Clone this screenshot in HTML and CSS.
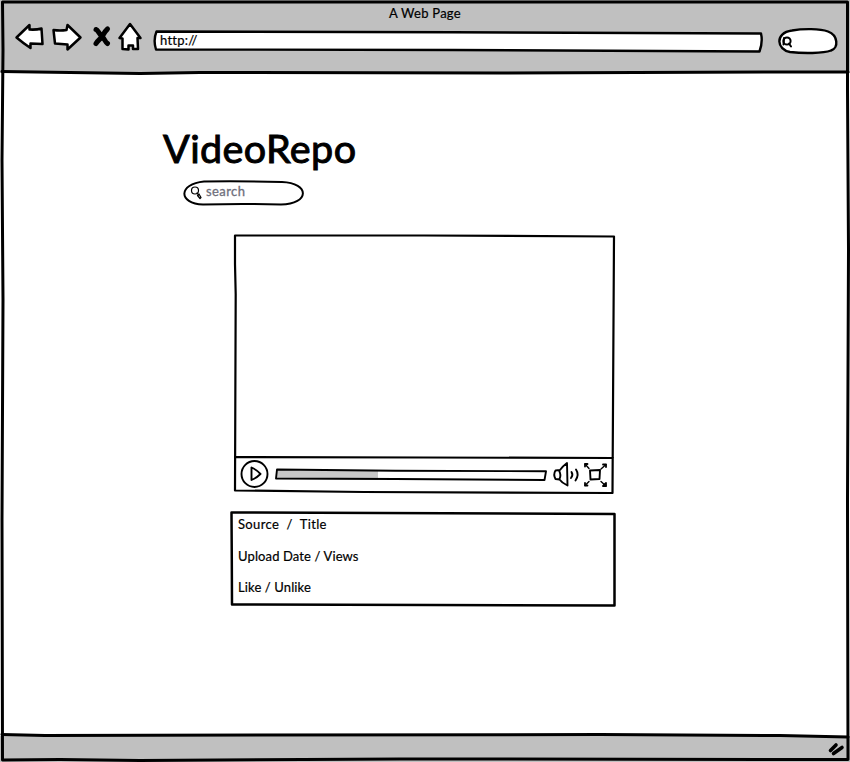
FILE: index.html
```html
<!DOCTYPE html>
<html lang="en">
<head>
<meta charset="utf-8">
<title>A Web Page</title>
<link rel="stylesheet" href="styles.css">
</head>
<body>
<div class="browser">
  <header class="chrome">
    <div class="page-title">A Web Page</div>
    <nav class="toolbar">
      <svg class="icon back" width="30" height="30" viewBox="0 0 30 30"><path d="M1.500 15.500 14.500 3V7.500Q21 8 26.500 6.500L27.500 22 15.500 21.500V26Q8 21 1.500 15.500Z"/></svg>
      <svg class="icon forward" width="30" height="30" viewBox="0 0 30 30"><path d="M1.500 8Q8 9 14.500 8L15.500 3 28.500 15.500 15.500 27.500V22.500L3 21.500Z"/></svg>
      <svg class="icon stop" width="20" height="30" viewBox="0 0 20 30"><path d="M4 7.500C6 8 7 12 10 14.500S13 20 15.500 21.500M15.500 7C12 10 11 14 9 16S5.500 19 4 21.500"/></svg>
      <svg class="icon home" width="24" height="30" viewBox="0 0 24 30"><path d="M12 2 22.500 16H19.500L20 27H15V23.500H10.500V27.500L4.500 27V16.500L1.500 16Z"/></svg>
      <div class="address">
        <svg class="outline" viewBox="0 0 611 24"><path class="sketch" d="M3.500 2.500 300 3.300 608 4.500Q610 13 606.500 22.500L300 21 3 20.500Q0 11 3.500 2.500Z"/></svg>
        <span>http://</span>
      </div>
      <div class="quick-search">
        <svg class="outline" viewBox="0 0 62 28"><path class="sketch" d="M15 3.500C26 1.500 43 1.500 51 4.500 61 8 62 21 54 23.500 46 26.500 26 26.500 13 25 0 23-3 6 15 3.500Z"/><circle class="lens" cx="10" cy="14" r="3.600"/><path class="lens" d="M7 11 6.500 17.500M12 16.500 14 19.500"/></svg>
      </div>
    </nav>
    <svg class="outline" viewBox="0 0 850 73"><path class="rule" d="M2 71.500 70 72.500 140 73.500 200 72.500 500 73 780 72H848"/></svg>
  </header>
  <main class="content">
    <h1>VideoRepo</h1>
    <div class="search">
      <svg class="outline" viewBox="0 0 122 26"><path d="M21 1.500Q60 1 99 2C127 3 127 24 98 24.500Q60 23.500 20 24.500C-5 23.500-5 4 21 1.500Z"/><circle class="thin" cx="12" cy="10.500" r="3.500"/><path class="thin" d="M14 13 15.500 15M14.500 15.500 16 14 18 17.500 17 18.500Z"/></svg>
      <span>search</span>
    </div>
    <section class="player">
      <svg class="outline" viewBox="0 0 382 261"><path d="M1 1.500 190 1.500 380 2.500 378.500 259 130 258 1 256.500 1.700 60 1 30ZM1 223 190 223.500 379 224"/></svg>
      <div class="controls">
        <svg class="play" width="30" height="30" viewBox="0 0 30 30"><circle cx="14.500" cy="16" r="13"/><path d="M11.500 9.500V22Q17 19.500 20.500 16 17 12 11.500 9.500Z"/></svg>
        <svg class="track" width="274" height="16" viewBox="0 0 274 16"><path class="fill" d="M2 2 103 3V11.500L1 11Z"/><path d="M2 1.500 120 2.700 271 3.300 269.500 12 120 11 1 10.500Z"/></svg>
        <svg class="volume" width="28" height="28" viewBox="0 0 28 28"><path d="M2.500 10.500 7 10Q10 6 14 3L14.500 25.500Q9 23 6.500 19.500L2.500 19Q0 14.500 2.500 10.500ZM6 10.500Q8.500 15 6.500 19M18.500 12Q20.500 15 18 18M23 9.500Q26.500 14.500 22.500 20.500"/></svg>
        <svg class="fullscreen" width="26" height="28" viewBox="0 0 26 28"><path d="M6 10.500 16 10 15.500 19 6.500 19.500Z"/><path class="arrow" d="M5 8.500 1 4M17 9 22 4.500M5 21.500 1 25.500M17 21.500 22 26"/><path class="tip" d="M1 6.500V4H3.500M19 4.500H22V7M1 23V25.500H3.500M19 26H22V23Z"/></svg>
      </div>
    </section>
    <section class="details">
      <svg class="outline" viewBox="0 0 386 96"><path d="M1.500 1.500 150 2 384.500 3 384.500 94.500 200 94 2 93.500 1.800 50Z"/></svg>
      <p class="source">Source&nbsp; /&nbsp; Title</p>
      <p class="upload">Upload Date / Views</p>
      <p class="like">Like / Unlike</p>
    </section>
  </main>
  <footer class="status">
    <svg class="outline" viewBox="0 0 850 28"><path class="rule" d="M2 .5 45 1.500 600 .5 780 1.500 848 3"/><path class="grip" d="M830.500 16.500 836 11M833.500 19.500 842 13.500"/></svg>
  </footer>
  <svg class="outline frame" viewBox="0 0 850 762"><path class="rule" d="M2.500 2H847.500V90L848.500 250 847.500 500 848 759.500 400 759 140 760.500 60 759.500 2.500 760 2 520 3 300 2 160 3 50Z"/></svg>
</div>
</body>
</html>
```
FILE: styles.css
```css
* { box-sizing: border-box; }
body { margin: 0; font-family: Lato, "Noto Sans", sans-serif; font-size: 13px; line-height: 16px; color: #000; background: #fff; }
.browser { position: relative; width: 850px; height: 762px; display: flex; flex-direction: column; overflow: hidden; }
svg { display: block; flex: none; fill: none; stroke: #000; stroke-width: 2.2; stroke-linecap: round; stroke-linejoin: round; overflow: visible; }
.outline { position: absolute; inset: 0; width: 100%; height: 100%; pointer-events: none; }
.rule { stroke-width: 3; }
.chrome { position: relative; height: 73px; padding-top: 5px; background: #c0c0c0; }
.page-title { text-align: center; letter-spacing: .25px; -webkit-text-stroke: .2px; }
.toolbar { display: flex; align-items: flex-start; padding: 1px 0 0 15px; position: relative; z-index: 1; }
.icon { fill: #fff; stroke-width: 2.5; }
.forward { margin-left: 7px; }
.stop { margin-left: 10px; fill: none; stroke-width: 5; }
.home { margin-left: 6px; }
.address { position: relative; width: 611px; height: 24px; margin: 7px 0 0 11px; padding: 3px 7px; }
.address span { position: relative; letter-spacing: .25px; -webkit-text-stroke: .2px; }
.sketch { fill: #fff; stroke-width: 2.4; }
.quick-search { position: relative; width: 62px; height: 28px; margin: 5px 0 0 13px; }
.lens { stroke-width: 2; }
.content { flex: 1; }
h1 { margin: 48px 0 0 163px; font-size: 39.500px; line-height: 54px; font-weight: 400; letter-spacing: .4px; -webkit-text-stroke: 1px; }
.search { position: relative; width: 122px; height: 26px; margin: 5px 0 0 183px; padding: 3px 0 0 23px; color: #6f6f7c; }
.search .outline { stroke-width: 2; }
.search .thin { stroke-width: 1.2; }
.search span { position: relative; letter-spacing: .4px; -webkit-text-stroke: .3px; }
.player { position: relative; width: 382px; height: 261px; margin: 28px 0 0 234px; padding-top: 224px; }
.controls { display: flex; align-items: flex-start; padding-left: 6px; }
.controls svg { stroke-width: 1.9; }
.controls .fill { fill: #c8c8c8; stroke: none; }
.controls .arrow { stroke-width: 1.4; }
.controls .tip { stroke-width: 1.8; }
.track { margin: 10px 0 0 5px; }
.volume { margin: 2px 0 0 4px; }
.fullscreen { margin: 2px 0 0 3px; }
.details { position: relative; width: 386px; height: 96px; margin: 16px 0 0 230px; padding: 5px 8px; -webkit-text-stroke: .2px; }
.details .outline { stroke-width: 2.5; }
.details p { position: relative; margin: 0 0 15.5px; letter-spacing: .35px; }
.details .upload, .details .like { letter-spacing: .12px; }
.status { position: relative; height: 28px; background: linear-gradient(#fff 2px, #c0c0c0 2px); }
.status .grip { stroke-width: 3.6; }
```
